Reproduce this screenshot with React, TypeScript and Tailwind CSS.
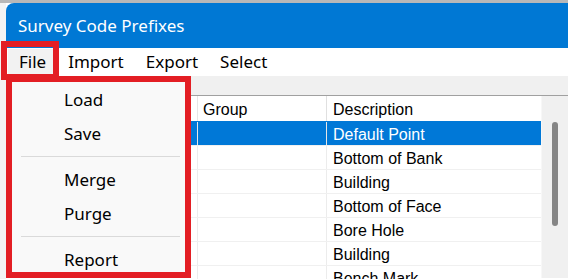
import React from 'react'

const rows = [
  { desc: 'Default Point', selected: true },
  { desc: 'Bottom of Bank' },
  { desc: 'Building' },
  { desc: 'Bottom of Face' },
  { desc: 'Bore Hole' },
  { desc: 'Building' },
  { desc: 'Bench Mark' },
]

const menuItems = ['File', 'Import', 'Export', 'Select']

function MenuSep() {
  return (
    <div className="h-[12px] pt-[5px]">
      <div className="ml-[9px] mr-[5px] h-px bg-[#dadada]" />
    </div>
  )
}

function MenuItem({ label }: { label: string }) {
  return (
    <div className="h-[34px] flex items-center pl-[52px] text-[17px] text-black">
      {label}
    </div>
  )
}

export default function App() {
  return (
    <div
      className="relative w-[568px] h-[279px] overflow-hidden bg-white"
      style={{ fontFamily: '"Noto Sans", sans-serif' }}
    >
      {/* desktop strip */}
      <div className="h-[3px] bg-[#b8b8b8]" />

      <div className="flex">
        <div className="w-[6px] bg-[#f3f3f3]" />
        <div className="flex-1 flex flex-col">
          {/* Title bar */}
          <div className="h-[45px] bg-[#0078d4] rounded-tl-[8px] flex items-center pl-[12px] text-[17px] text-white">
            Survey Code Prefixes
          </div>

          {/* Menu bar */}
          <div className="h-[28px] bg-white flex items-center pl-[2px] text-[17px] text-black">
            {menuItems.map((m, i) => (
              <div
                key={m}
                className={`h-[27px] flex items-center px-[11px] ${i === 0 ? 'bg-[#f2f2f2]' : ''}`}
              >
                {m}
              </div>
            ))}
          </div>

          {/* toolbar strip */}
          <div className="h-[20px] bg-[#f0f0f0] border-b border-[#a0a0a0]" />

          {/* Grid */}
          <div className="flex" style={{ fontFamily: '"Liberation Sans", Arial, sans-serif' }}>
            <div className="w-[535px] bg-white text-[16px] text-black">
              <div className="h-[25px] flex">
                <div className="w-[191px]" />
                <div className="w-[129px] border-l border-[#e6e6e6] flex items-center pl-[5px] pt-[2px]">Group</div>
                <div className="flex-1 border-l border-[#e0e0e0] flex items-center pl-[6px] pt-[2px]">Description</div>
              </div>
              {rows.map((r, i) => (
                <div
                  key={i}
                  className={`h-[24px] flex border-t ${
                    r.selected ? 'bg-[#0078d7] text-white border-[#0078d7]' : 'border-[#f0f0f0]'
                  }`}
                >
                  <div className="w-[191px]" />
                  <div
                    className={`w-[129px] border-l ${r.selected ? 'border-[#e6e6e6]' : 'border-[#ececec]'}`}
                  />
                  <div
                    className={`flex-1 border-l flex items-center pl-[6px] pt-[2px] ${
                      r.selected ? 'border-[#e6e6e6]' : 'border-[#ececec]'
                    }`}
                  >
                    {r.desc}
                  </div>
                </div>
              ))}
            </div>
            {/* scrollbar */}
            <div className="flex-1 bg-[#f0f0f0] border-l border-[#f7f7f7] h-[182px] pl-[10px] pt-[26px]">
              <div className="w-[6px] h-[104px] rounded-[3px] bg-[#858585]" />
            </div>
          </div>
        </div>
      </div>

      {/* File dropdown */}
      <div className="absolute left-[6px] top-[76px] w-[185px] h-[202px] bg-[#f9f9f9] border-[6px] border-[#e31e24] pt-px">
        <MenuItem label="Load" />
        <MenuItem label="Save" />
        <MenuSep />
        <MenuItem label="Merge" />
        <MenuItem label="Purge" />
        <MenuSep />
        <MenuItem label="Report" />
      </div>

      {/* highlight around File */}
      <div className="absolute left-[1px] top-[41px] w-[58px] h-[39px] border-[6px] border-[#e31e24]" />
    </div>
  )
}
